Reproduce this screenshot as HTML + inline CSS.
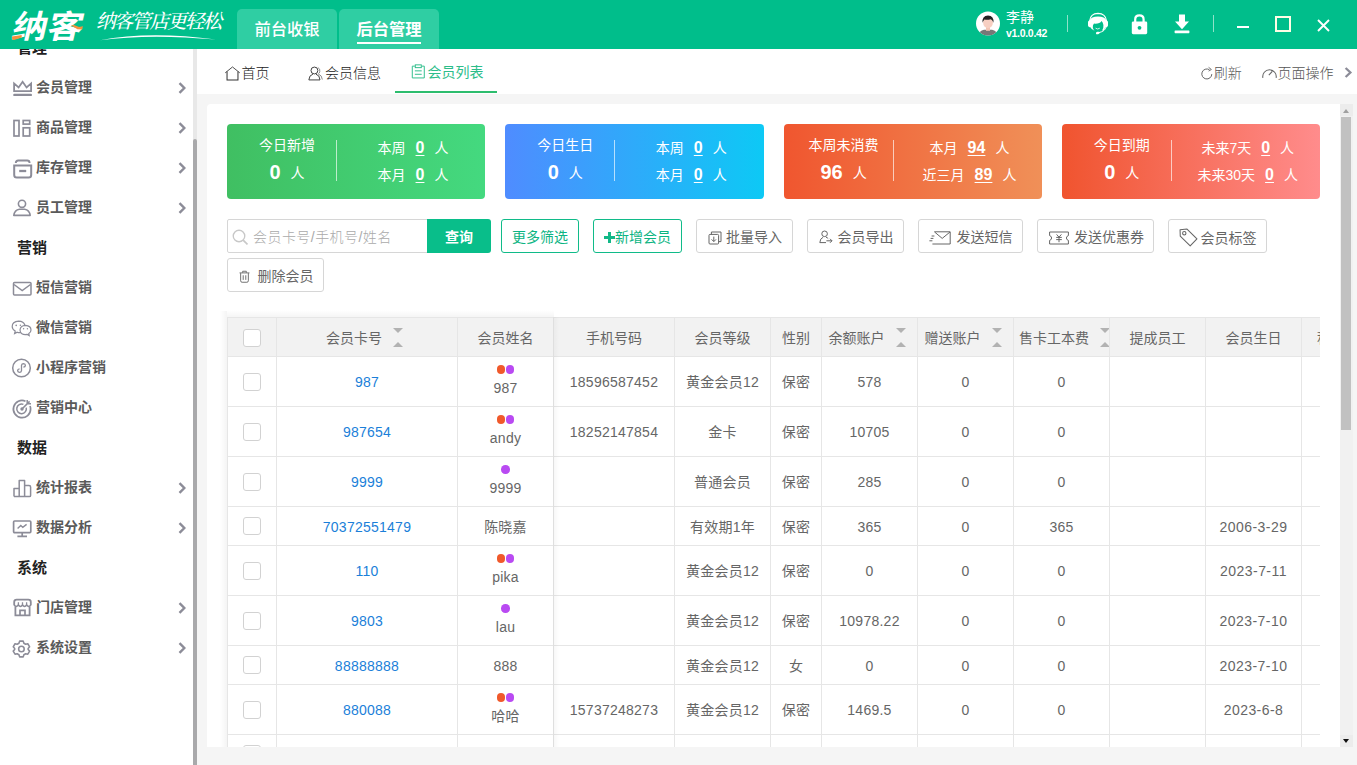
<!DOCTYPE html>
<html lang="zh-CN">
<head>
<meta charset="utf-8">
<title>纳客 - 会员列表</title>
<style>
*{box-sizing:border-box;margin:0;padding:0}
html,body{width:1357px;height:765px;overflow:hidden;background:#f5f5f5}
body{position:relative;font-family:"Liberation Sans","Noto Sans CJK SC",sans-serif;font-size:14px;color:#333}
.abs{position:absolute}
/* ---------- header ---------- */
#hdr{position:absolute;left:0;top:0;width:1357px;height:49px;background:#00be8b;z-index:10}
#logo{position:absolute;left:13px;top:7.5px;width:76px;font-size:32px;line-height:38px;font-weight:bold;color:#fff;letter-spacing:0;white-space:nowrap;transform-origin:0 50%;transform:scaleX(1.1) skewX(-12deg);font-family:"Liberation Sans","Noto Sans CJK SC",sans-serif}
#slogan{position:absolute;left:96px;top:9px;font-size:19.5px;line-height:26px;color:#fff;letter-spacing:-1.7px;font-style:italic;white-space:nowrap;font-family:"Liberation Serif","Noto Serif CJK SC",serif;font-weight:500}
.htab{position:absolute;top:9px;height:40px;width:100px;font-weight:500;background:#2fcea3;border-radius:5px 5px 0 0;color:#fff;font-size:16.3px;line-height:41px;text-align:center}
.htab.on{font-weight:bold}
.htab.on i{position:absolute;left:18px;right:18px;bottom:4.8px;height:2px;background:#fff}
#uname{position:absolute;left:1006px;top:8px;color:#fff;font-size:14px;line-height:18px}
#uver{position:absolute;left:1006px;top:26.2px;color:#fff;font-size:10.5px;line-height:14px;font-weight:bold;letter-spacing:-0.3px}
.hsep{position:absolute;top:15px;width:1px;height:17px;background:#8fe2c9}
/* ---------- sidebar ---------- */
#side{position:absolute;left:0;top:49px;width:193px;height:716px;background:#fff;overflow:hidden}
#sbar{position:absolute;left:193px;top:49px;width:4px;height:716px;background:#e8e8e8}
#sbar i{position:absolute;left:0;top:89.6px;width:4px;height:627px;background:#a9a9ab;border-radius:2px 2px 0 0}
.mi{position:absolute;left:0;width:193px;height:40px;line-height:41px;font-size:14px;font-weight:bold;color:#5a5a5a;padding-left:36px}
.mi svg.ic{position:absolute;left:11px;top:9px;width:22px;height:22px}
.mi svg.ar{position:absolute;left:177px;top:15px;width:10px;height:12px}
.mh{position:absolute;left:17px;width:160px;height:40px;line-height:42px;font-size:15px;font-weight:bold;color:#222}
/* ---------- main ---------- */
#tabs{position:absolute;left:197px;top:49px;width:1160px;height:45px;background:#fff}
.pt{position:absolute;top:0;height:45px;line-height:49px;font-size:14px;color:#222;white-space:nowrap;font-weight:300}
.pt.on{color:#2dbd8a;font-weight:400;top:-1.5px}
#panel{position:absolute;left:207px;top:104px;width:1133px;height:643px;background:#fff;overflow:hidden;border-radius:4px 0 0 0}
#vs{position:absolute;left:1340px;top:104px;width:13px;height:643px;background:#f1f1f1}
#vs i{position:absolute;left:1px;top:13px;width:10px;height:313px;background:#c1c1c1}
#vs b{position:absolute;left:0;width:13px;height:12px;background:#ececec}
#vs b.t{top:0}
#vs b.b{bottom:0}
#vs b.t:after{content:'';position:absolute;left:3px;top:4.5px;border:3.5px solid transparent;border-bottom:4.5px solid #a0a0a0;border-top-width:0}
#vs b.b:after{content:'';position:absolute;left:2.6px;top:3.8px;border:3.9px solid transparent;border-top:4.5px solid #111;border-bottom-width:0}

.pt svg.ti{display:inline-block;vertical-align:-2.5px;width:15px;height:15px;margin-right:2px;margin-left:-1px}
.pt.r{color:#555}
.ptline{position:absolute;left:198px;top:42px;width:102px;height:2px;background:#2dbd6e}
/* cards */
.card{position:absolute;top:20px;width:258.25px;height:75px;border-radius:4px;color:#fff;font-size:14px;font-weight:400}
.c1{background:linear-gradient(90deg,#40bf62,#44d97f)}
.c2{background:linear-gradient(90deg,#4f8cff,#0dc9f5)}
.c3{background:linear-gradient(90deg,#f0562f,#f09058)}
.c4{background:linear-gradient(90deg,#f0542f,#ff8c8c)}
.cl{position:absolute;left:0;top:0;width:120px;text-align:center}
.ct{position:absolute;left:0;width:120px;top:11px;line-height:20px}
.cn{position:absolute;left:0;width:120px;top:34.5px;line-height:26px}
.cn b{font-size:20px;margin-right:10px;vertical-align:-1px}
.cd{position:absolute;left:109px;top:16px;width:1px;height:41px;background:rgba(255,255,255,.65)}
.crs{position:absolute;left:110px;top:0;width:152px;text-align:center}
.cr{position:absolute;left:0;width:152px;line-height:20px;white-space:nowrap}
.cr:nth-child(1){top:13.5px}
.cr:nth-child(2){top:41px}
.cr b{font-size:16px;margin:0 10px;text-decoration:underline;text-underline-offset:2px}
/* toolbar */
.sinp{position:absolute;width:201px;height:34px;border:1px solid #d6d6d6;border-radius:2px 0 0 2px;background:#fff}
.sinp span{position:absolute;left:25px;top:0;line-height:34px;font-size:14px;color:#aaa;white-space:nowrap;letter-spacing:.45px;font-weight:300}
.qbtn{position:absolute;width:64px;height:34px;background:#09be8a;border-radius:0 3px 3px 0;color:#fff;font-weight:bold;font-size:14px;line-height:36px;text-align:center}
.btn{position:absolute;height:34px;border:1px solid #d6d6d6;border-radius:3px;background:#fff;color:#666;font-size:14px;line-height:35.5px;white-space:nowrap;font-weight:400}
.btn.g{border-color:#10bb89;color:#0cb483;text-align:center;font-weight:400}
.btn i{position:absolute;display:block;line-height:0}
.btn span{position:absolute;top:0}
.btn .plus{position:absolute;left:10px;top:12px;width:11px;height:11px;font-size:0}
.btn .plus:before{content:'';position:absolute;left:0;top:3.8px;width:10.8px;height:3.4px;background:#12b887}
.btn .plus:after{content:'';position:absolute;left:3.7px;top:0;width:3.6px;height:11px;background:#12b887}
/* table */
#tbl{position:absolute;width:1093px;height:430px;overflow:hidden}
#tbl .thbg{position:absolute;background:#f2f2f2}
#tbl .hl{position:absolute;left:0;width:1200px;height:1px;background:#e6e6e6}
#tbl .vl{position:absolute;top:0;width:1px;height:500px;background:#e6e6e6}
#tbl .th{position:absolute;height:38px;line-height:40px;text-align:center;color:#666;font-weight:400;font-size:14px;white-space:nowrap;overflow:hidden}
#tbl .td{position:absolute;text-align:center;color:#666;font-weight:400;padding-top:.5px;letter-spacing:.25px;font-size:14px;white-space:nowrap;overflow:hidden}
#tbl .td.lk{color:#1b7fd9}
#tbl .td.dt{letter-spacing:.45px}
#tbl .cbx{position:absolute;width:18px;height:18px;border:1px solid #d2d2d2;border-radius:3px;background:#fff}
#tbl .st{display:inline-block;position:relative;width:10px;height:20px;margin-left:11px;margin-right:5px;vertical-align:-6px;text-decoration:none}
#tbl .st u{position:absolute;left:0;width:0;height:0;border:5px solid transparent;text-decoration:none}
#tbl .st u.d{top:-0.6px;border-top-color:#b2b2b2;border-bottom-width:0}
#tbl .st u.u{top:13.2px;border-bottom-color:#b2b2b2;border-top-width:0}
#tbl .dots{position:absolute;left:0;right:0;top:8px;height:9px;line-height:0;text-align:center;font-size:0}
#tbl .dots em{display:inline-block;width:8.6px;height:8.6px;border-radius:50%;margin:0 .4px}
#tbl .dots em.o{background:#f0592b}
#tbl .dots em.v{background:#b94af2}
#tbl .nn{position:absolute;left:0;right:0;top:20px;line-height:22px}
#tbl .fsh{position:absolute;top:0;width:6px;height:500px;background:linear-gradient(90deg,rgba(0,0,0,.035),rgba(0,0,0,0))}
</style>
</head>
<body>
<div id="hdr">
  <div id="logo">纳客</div>
  <div id="slogan">纳客管店更轻松</div>
  <svg class="abs" style="left:0;top:0;width:230px;height:49px" viewBox="0 0 230 49"><path d="M100 40.2 Q150 30.6 216 39.6 Q150 33.4 100 40.2 Z" fill="#fff"/><path d="M12 36.6 L21.6 35 L21.8 37.6 L14 40 L12.2 39.4 Z" fill="#f5923e"/><path d="M71 25.2 L74 25 L79 27 L83 26.2 L82 29.4 L77.4 29.2 Z" fill="#f5923e"/></svg>
  <div class="htab" style="left:237px">前台收银</div>
  <div class="htab on" style="left:339px">后台管理<i></i></div>
  <svg class="abs" style="left:975px;top:11px;width:26px;height:26px" viewBox="0 0 26 26"><defs><clipPath id="avc"><circle cx="13" cy="12.6" r="12"/></clipPath></defs><circle cx="13" cy="12.6" r="12" fill="#fff"/><g clip-path="url(#avc)"><path d="M3 26 Q3.6 19.6 9 18.8 H17 Q22.4 19.6 23 26 Z" fill="#777"/><rect x="11" y="15.6" width="4" height="4.2" fill="#f3c4b4"/><ellipse cx="13" cy="11.6" rx="4.9" ry="5.6" fill="#f7cfc2"/><path d="M7.6 11.8 Q6.8 5 13 4.6 Q19.2 5 18.4 11.8 Q17.6 8.8 15.8 8.2 Q12 9.4 9.4 8.4 Q8.2 9.6 7.6 11.8 Z" fill="#222"/></g></svg>
  <svg class="abs" style="left:1083px;top:9px;width:30px;height:30px" viewBox="0 0 30 30"><path d="M6.6 12 Q7.4 4.6 15 4.4 Q22.6 4.6 23.6 12" fill="none" stroke="#fff" stroke-width="1.1"/><path d="M5 13 Q5 11.6 6.6 11.4 Q8 7.6 15 7.4 Q22 7.6 23.4 11.4 Q25 11.6 25 13 V16.6 Q25 18 23.4 18.2 L22.6 18.2 Q21.4 21.2 19 21.8 Q20.8 19.4 20.4 16 Q20 13.6 18.6 12 Q16.8 15 11 14.6 Q9.6 16.4 9.8 18.4 Q10 20.4 11.6 21.8 Q8.6 20.8 7.4 18.2 L6.6 18.2 Q5 18 5 16.6 Z" fill="#fff"/><path d="M12.6 19.2 Q14.6 20.8 16.8 19.2" fill="none" stroke="#fff" stroke-width="0.8"/><path d="M23.2 17.6 Q22.4 22.2 16 23.6" fill="none" stroke="#fff" stroke-width="1"/><ellipse cx="14.8" cy="24" rx="1.9" ry="1.3" fill="#fff" transform="rotate(-12 14.8 24)"/></svg>
  <svg class="abs" style="left:1131px;top:14px;width:17px;height:21px" viewBox="0 0 17 21"><path d="M4.2 8 V5.4 Q4.2 1.4 8.4 1.4 Q12.6 1.4 12.6 5.4 V8" fill="none" stroke="#fff" stroke-width="2.2"/><rect x="0.8" y="7.4" width="15.4" height="12.8" rx="1.4" fill="#fff"/><circle cx="8.5" cy="13.8" r="1.9" fill="#00be8b"/></svg>
  <svg class="abs" style="left:1174px;top:14px;width:16px;height:20px" viewBox="0 0 16 20"><path d="M5 0.6 H11 V7.4 H15 L8 15.2 L1 7.4 H5 Z" fill="#fff"/><rect x="0.6" y="16.4" width="14.8" height="2.8" rx="0.6" fill="#fff"/></svg>
  <div class="abs" style="left:1237px;top:25.5px;width:12px;height:2.5px;background:#fff"></div>
  <div class="abs" style="left:1275px;top:16px;width:16px;height:16px;border:2px solid #fffde6"></div>
  <svg class="abs" style="left:1317px;top:18.5px;width:13px;height:13px" viewBox="0 0 13 13"><path d="M1 1 L12 12 M12 1 L1 12" stroke="#fff" stroke-width="1.9" fill="none"/></svg>
  <div id="uname">李静</div>
  <div id="uver">v1.0.0.42</div>
  <div class="hsep" style="left:1067px"></div>
  <div class="hsep" style="left:1213px"></div>
</div>
<div id="side">
<div class="mh" style="top:-22px">管理</div>
<div class="mi" style="top:18px"><svg class="ic" viewBox="0 0 22 22" style="left:11.5px;top:12.5px"><path d="M2.1 3.4 V11.2 H19.1 V3.4 L14.6 7.4 L10.6 1.8 L6.6 7.4 Z" fill="none" stroke="#8c8c98" stroke-width="1.8" /><path d="M2.4 14.9 H18.8" fill="none" stroke="#8c8c98" stroke-width="2.4" stroke-linecap="round"/></svg>会员管理<svg class="ar" viewBox="0 0 10 12"><path d="M2.5 1.2 L7.3 6 L2.5 10.8" fill="none" stroke="#8c8c98" stroke-width="2.4"/></svg></div>
<div class="mi" style="top:58px"><svg class="ic" viewBox="0 0 22 22" style="left:11.5px;top:11.2px"><rect x="2" y="2.5" width="5" height="15.5" rx="0" fill="none" stroke="#8c8c98" stroke-width="1.7"/><rect x="11.2" y="2.5" width="6.5" height="3.6" rx="0" fill="none" stroke="#8c8c98" stroke-width="1.7"/><rect x="11.2" y="9.8" width="6.5" height="8.2" rx="0" fill="none" stroke="#8c8c98" stroke-width="1.7"/></svg>商品管理<svg class="ar" viewBox="0 0 10 12"><path d="M2.5 1.2 L7.3 6 L2.5 10.8" fill="none" stroke="#8c8c98" stroke-width="2.4"/></svg></div>
<div class="mi" style="top:98px"><svg class="ic" viewBox="0 0 22 22" style="left:11.5px;top:11.5px"><path d="M3.8 4 Q3.8 1.5 6.2 1.5 H15.2 Q17.6 1.5 17.6 4" fill="none" stroke="#8c8c98" stroke-width="1.9" /><path d="M2.2 6.6 H19.2 V16 Q19.2 18.6 16.6 18.6 H4.8 Q2.2 18.6 2.2 16 Z" fill="none" stroke="#8c8c98" stroke-width="2" /><path d="M7.2 12 H14.2" fill="none" stroke="#8c8c98" stroke-width="2.3" /></svg>库存管理<svg class="ar" viewBox="0 0 10 12"><path d="M2.5 1.2 L7.3 6 L2.5 10.8" fill="none" stroke="#8c8c98" stroke-width="2.4"/></svg></div>
<div class="mi" style="top:138px"><svg class="ic" viewBox="0 0 22 22" style="left:11.5px;top:10.5px"><circle cx="10" cy="5.8" r="3.6" fill="none" stroke="#8c8c98" stroke-width="1.6"/><path d="M1.8 17.4 Q2.6 11.8 7.4 11.2 H12.6 Q17.4 11.8 18.2 17.4 Z" fill="none" stroke="#8c8c98" stroke-width="1.6" stroke-linejoin="round"/></svg>员工管理<svg class="ar" viewBox="0 0 10 12"><path d="M2.5 1.2 L7.3 6 L2.5 10.8" fill="none" stroke="#8c8c98" stroke-width="2.4"/></svg></div>
<div class="mh" style="top:178px">营销</div>
<div class="mi" style="top:218px"><svg class="ic" viewBox="0 0 22 22" style="left:11.5px;top:11.7px"><rect x="1.5" y="3.5" width="17.5" height="12.5" rx="1" fill="none" stroke="#8c8c98" stroke-width="1.5"/><path d="M2 5.5 L10.2 11.5 L18.5 5.5" fill="none" stroke="#8c8c98" stroke-width="1.5" /></svg>短信营销</div>
<div class="mi" style="top:258px"><svg class="ic" viewBox="0 0 22 22" style="left:11px;top:11px"><path d="M9 14.6 Q7.6 14.8 6.2 14.2 L3.6 15.6 L4.2 13 Q1.2 11.2 1.2 8.4 Q1.2 3.8 7.6 3.2 Q12.8 3.4 13.8 7.2" fill="none" stroke="#8c8c98" stroke-width="1.2" /><path d="M14.5 7.4 Q20 7.8 20 12 Q20 14.2 17.8 15.6 L18.2 17.6 L16.2 16.4 Q9.2 17.4 9 12 Q9.4 7.6 14.5 7.4 Z" fill="none" stroke="#8c8c98" stroke-width="1.2" /><circle cx="5.2" cy="7.4" r="0.8" fill="#8c8c98"/><circle cx="9.4" cy="7.2" r="0.8" fill="#8c8c98"/><circle cx="12.6" cy="10.8" r="0.7" fill="#8c8c98"/><circle cx="16.4" cy="10.8" r="0.7" fill="#8c8c98"/></svg>微信营销</div>
<div class="mi" style="top:298px"><svg class="ic" viewBox="0 0 22 22" style="left:11.3px;top:11.2px"><circle cx="10.5" cy="10" r="8.8" fill="none" stroke="#8c8c98" stroke-width="1.5"/><path d="M10.5 7.2 V12.6 Q10.3 14.4 8.4 14.4 Q6.6 14.3 6.6 12.6 Q6.7 11 8.6 10.8 M10.5 12.8 V7.4 Q10.7 5.6 12.6 5.6 Q14.4 5.7 14.4 7.4 Q14.3 9 12.4 9.2" fill="none" stroke="#8c8c98" stroke-width="1.3" /></svg>小程序营销</div>
<div class="mi" style="top:338px"><svg class="ic" viewBox="0 0 22 22" style="left:11.3px;top:11.2px"><path d="M19 8 Q19.6 9.4 19.6 11 A8.6 8.6 0 1 1 14.5 3.2" fill="none" stroke="#8c8c98" stroke-width="1.7" /><path d="M15.2 9.6 A4.8 4.8 0 1 1 12.4 6.4" fill="none" stroke="#8c8c98" stroke-width="1.5" /><circle cx="11" cy="11" r="1.7" fill="#8c8c98"/><path d="M11 11 L18.6 3.4 M16.2 2 V5.8 H20" fill="none" stroke="#8c8c98" stroke-width="1.5" /></svg>营销中心</div>
<div class="mh" style="top:378px">数据</div>
<div class="mi" style="top:418px"><svg class="ic" viewBox="0 0 22 22" style="left:11.6px;top:11.2px"><path d="M2 18.6 V10.6 H7.2 M7.2 18.6 V2.6 H12.6 V18.6 M12.6 7.4 H17 Q18.6 7.4 18.6 9 V17.4 Q18.6 18.6 17.4 18.6 H2" fill="none" stroke="#8c8c98" stroke-width="1.5" stroke-linejoin="round"/></svg>统计报表<svg class="ar" viewBox="0 0 10 12"><path d="M2.5 1.2 L7.3 6 L2.5 10.8" fill="none" stroke="#8c8c98" stroke-width="2.4"/></svg></div>
<div class="mi" style="top:458px"><svg class="ic" viewBox="0 0 22 22" style="left:11.6px;top:10.6px"><rect x="1.6" y="3" width="17.2" height="11.6" rx="1" fill="none" stroke="#8c8c98" stroke-width="1.7"/><path d="M10.2 14.6 V18 M5.4 18.4 H15" fill="none" stroke="#8c8c98" stroke-width="1.7" /><path d="M5.6 10.4 L8.8 7.4 L10.8 9.4 L14.6 6.4" fill="none" stroke="#8c8c98" stroke-width="1.4" /></svg>数据分析<svg class="ar" viewBox="0 0 10 12"><path d="M2.5 1.2 L7.3 6 L2.5 10.8" fill="none" stroke="#8c8c98" stroke-width="2.4"/></svg></div>
<div class="mh" style="top:498px">系统</div>
<div class="mi" style="top:538px"><svg class="ic" viewBox="0 0 22 22" style="left:11.6px;top:10.4px"><path d="M3.4 9.8 V18.4 H17.6 V9.8" fill="none" stroke="#8c8c98" stroke-width="1.8" /><path d="M2.2 8.2 V5 Q2.2 2.6 4.6 2.6 H16.4 Q18.8 2.6 18.8 5 V8.2" fill="none" stroke="#8c8c98" stroke-width="1.8" /><path d="M2.2 8 Q4 10.8 6.4 8 Q8.4 10.8 10.5 8 Q12.6 10.8 14.6 8 Q17 10.8 18.8 8" fill="none" stroke="#8c8c98" stroke-width="1.5" /><path d="M6.4 5.2 V8 M10.5 5.2 V8 M14.6 5.2 V8" fill="none" stroke="#8c8c98" stroke-width="1.3" /><path d="M8 18.4 V13.4 H13 V18.4" fill="none" stroke="#8c8c98" stroke-width="1.7" /></svg>门店管理<svg class="ar" viewBox="0 0 10 12"><path d="M2.5 1.2 L7.3 6 L2.5 10.8" fill="none" stroke="#8c8c98" stroke-width="2.4"/></svg></div>
<div class="mi" style="top:578px"><svg class="ic" viewBox="0 0 22 22" style="left:11px;top:11px"><g transform="translate(1.4,1.8) scale(0.82)"><path d="M8.8 1.6 H13.2 L14 4.2 L16.2 5.4 L18.8 4.8 L21 8.6 L19.2 10.6 V11.8 L21 13.8 L18.8 17.6 L16.2 17 L14 18.2 L13.2 20.8 H8.8 L8 18.2 L5.8 17 L3.2 17.6 L1 13.8 L2.8 11.8 V10.6 L1 8.6 L3.2 4.8 L5.8 5.4 L8 4.2 Z" fill="none" stroke="#8c8c98" stroke-width="1.9" stroke-linejoin="round"/><circle cx="11" cy="11.2" r="3.4" fill="none" stroke="#8c8c98" stroke-width="1.9"/></g></svg>系统设置<svg class="ar" viewBox="0 0 10 12"><path d="M2.5 1.2 L7.3 6 L2.5 10.8" fill="none" stroke="#8c8c98" stroke-width="2.4"/></svg></div>
</div>
<div id="sbar"><i></i></div>
<div id="tabs">
<div class="pt" style="left:28.5px"><svg class="ti" viewBox="0 0 14 14"><path d="M0.2 6.4 L7 0.9 L13.8 6.4" fill="none" stroke="#333" stroke-width="0.8"/><path d="M1.9 5.2 V13.1 H12.1 V5.2" fill="none" stroke="#333" stroke-width="0.95"/></svg>首页</div>
<div class="pt" style="left:112px"><svg class="ti" viewBox="0 0 14 14"><circle cx="6" cy="4.2" r="3.2" fill="none" stroke="#333" stroke-width="0.85"/><path d="M0.8 13 Q1 8.6 4.6 7.6 M7.4 7.6 Q11 8.6 11.2 13 H0.8" fill="none" stroke="#333" stroke-width="0.85"/><path d="M9.2 1.4 Q11.6 2.4 11 5.4 Q10.6 6.8 9.6 7.4 Q13 8.6 13.4 12.6" fill="none" stroke="#888" stroke-width="0.9"/></svg>会员信息</div>
<div class="pt on" style="left:214.5px"><svg class="ti" viewBox="0 0 14 14"><path d="M3.6 2 H1.2 V13 H12.4 V2 H10" fill="none" stroke="#2dbd8a" stroke-width="0.9"/><rect x="4" y="0.8" width="5.6" height="2.6" fill="none" stroke="#2dbd8a" stroke-width="0.9"/><path d="M3.6 6.4 H10 M3.6 9.6 H10" fill="none" stroke="#2dbd8a" stroke-width="0.9"/></svg>会员列表</div>
<div class="ptline"></div>
<div class="pt r" style="left:1004.5px"><svg class="ti" style="width:12px;margin-right:1.3px" viewBox="0 0 12 14"><path d="M10.8 7.6 A5 5 0 1 1 8.4 3.2" fill="none" stroke="#666" stroke-width="1"/><path d="M7.6 0.8 L10.4 3 L7.6 4.6" fill="none" stroke="#666" stroke-width="0.9"/></svg>刷新</div>
<div class="pt r" style="left:1066px"><svg class="ti" style="margin-right:0.5px" viewBox="0 0 14 14"><path d="M0.8 11 A6.3 6.3 0 1 1 13.2 11" fill="none" stroke="#666" stroke-width="1"/><path d="M6.4 8.6 L9.6 5" fill="none" stroke="#666" stroke-width="1"/></svg>页面操作</div>
<svg class="abs" style="left:1147px;top:18px;width:9px;height:11px" viewBox="0 0 9 11"><path d="M1.6 1 L6.4 5.5 L1.6 10" fill="none" stroke="#8c8c98" stroke-width="2.3"/></svg>
</div>
<div id="panel">
<div class="card c1" style="left:20px"><div class="cl"><div class="ct">今日新增</div><div class="cn"><b>0</b>人</div></div><i class="cd"></i><div class="crs"><div class="cr">本周<b>0</b>人</div><div class="cr">本月<b>0</b>人</div></div></div>
<div class="card c2" style="left:298.25px"><div class="cl"><div class="ct">今日生日</div><div class="cn"><b>0</b>人</div></div><i class="cd"></i><div class="crs"><div class="cr">本周<b>0</b>人</div><div class="cr">本月<b>0</b>人</div></div></div>
<div class="card c3" style="left:576.5px"><div class="cl"><div class="ct">本周未消费</div><div class="cn"><b>96</b>人</div></div><i class="cd"></i><div class="crs"><div class="cr">本月<b>94</b>人</div><div class="cr">近三月<b>89</b>人</div></div></div>
<div class="card c4" style="left:854.75px"><div class="cl"><div class="ct">今日到期</div><div class="cn"><b>0</b>人</div></div><i class="cd"></i><div class="crs"><div class="cr">未来7天<b>0</b>人</div><div class="cr">未来30天<b>0</b>人</div></div></div>
<div class="sinp" style="left:20px;top:115px"><svg viewBox="0 0 16 16" style="position:absolute;left:3.5px;top:9px;width:16.5px;height:16.5px"><circle cx="6.8" cy="6.8" r="5.6" fill="none" stroke="#c8c8c8" stroke-width="1.3"/><path d="M10.8 10.8 L15 15" stroke="#c8c8c8" stroke-width="1.6" fill="none"/></svg><span>会员卡号/手机号/姓名</span></div>
<div class="qbtn" style="left:220px;top:115px">查询</div>
<div class="btn g" style="left:294px;top:115px;width:78px">更多筛选</div>
<div class="btn g" style="left:386px;top:115px;width:89px"><b class="plus">+</b><span style="left:21px">新增会员</span></div>
<div class="btn" style="left:489px;top:115px;width:97px"><i style="left:10.5px;top:10.5px"><svg viewBox="0 0 14 14" style="width:14px;height:14px"><path d="M3.4 3.4 V1 H13 V10.6 H10.6" fill="none" stroke="#666" stroke-width="1"/><rect x="1" y="3.4" width="9.6" height="9.6" rx="1" fill="none" stroke="#666" stroke-width="1"/><path d="M5.8 5.6 V10.4 M3.6 8.4 L5.8 10.6 L8 8.4" fill="none" stroke="#666" stroke-width="1"/></svg></i><span style="left:29px">批量导入</span></div>
<div class="btn" style="left:600px;top:115px;width:97px"><i style="left:10.5px;top:10px"><svg viewBox="0 0 14 14" style="width:14px;height:14px"><circle cx="5.6" cy="3.8" r="2.8" fill="none" stroke="#666" stroke-width="1"/><path d="M7 12.6 H0.8 Q1 8.4 4.2 7.2 M7 7.2 Q8.4 7.6 9.2 8.6" fill="none" stroke="#666" stroke-width="1"/><path d="M7.4 10.8 H13 M11 8.8 L13 10.8 L11 12.8" fill="none" stroke="#666" stroke-width="1"/></svg></i><span style="left:29.5px">会员导出</span></div>
<div class="btn" style="left:711px;top:115px;width:105px"><i style="left:10px;top:11px"><svg viewBox="0 0 22 14" style="width:22px;height:14px"><path d="M5.4 0.8 H21.2 V13 H3.4" fill="none" stroke="#666" stroke-width="1"/><path d="M5.6 1 L13.2 7.4 L21 1" fill="none" stroke="#666" stroke-width="1"/><path d="M2.6 5 H5.4 M1.6 7.4 H4.4 M0.4 9.8 H3.4" fill="none" stroke="#666" stroke-width="1"/></svg></i><span style="left:37.5px">发送短信</span></div>
<div class="btn" style="left:830px;top:115px;width:117px"><i style="left:10.5px;top:11px"><svg viewBox="0 0 20 14" style="width:20px;height:14px"><path d="M0.6 1 H19.4 V4.6 Q17.4 5.2 17.4 7 Q17.4 8.8 19.4 9.4 V13 H0.6 V9.4 Q2.6 8.8 2.6 7 Q2.6 5.2 0.6 4.6 Z" fill="none" stroke="#666" stroke-width="1"/><path d="M7.6 3.4 L10 6.2 L12.4 3.4 M7.2 6.4 H12.8 M7.2 8.6 H12.8 M10 6.2 V11.2" fill="none" stroke="#666" stroke-width="1"/></svg></i><span style="left:36px">发送优惠券</span></div>
<div class="btn" style="left:961px;top:115px;width:99px"><i style="left:10px;top:8px"><svg viewBox="0 0 18 18" style="width:19px;height:19px"><path d="M1 1.6 L7.6 1 L17 10.4 L10.6 17 L1.2 7.8 Z" fill="none" stroke="#666" stroke-width="1" stroke-linejoin="round"/><circle cx="5" cy="5" r="1.6" fill="none" stroke="#666" stroke-width="1"/></svg></i><span style="left:31.5px;top:1px">会员标签</span></div>
<div class="btn" style="left:20px;top:154px;width:97px"><i style="left:11px;top:11px"><svg viewBox="0 0 12 14" style="width:11px;height:13.5px"><path d="M0.6 2.8 H11.4 M4 2.6 V1 H8 V2.6 M1.8 3 V11.4 Q1.8 13 3.4 13 H8.6 Q10.2 13 10.2 11.4 V3 M4.6 5.4 V10.4 M7.4 5.4 V10.4" fill="none" stroke="#666" stroke-width="1"/></svg></i><span style="left:29.5px">删除会员</span></div>
<i class="abs" style="left:13px;top:207px;width:7px;height:440px;background:linear-gradient(90deg,rgba(0,0,0,0),rgba(0,0,0,.045))"></i><i class="abs" style="left:20px;top:206px;width:327px;height:7px;background:linear-gradient(180deg,rgba(0,0,0,0),rgba(0,0,0,.04))"></i>
<div id="tbl" style="left:20px;top:213px">
<div class="thbg" style="left:0;top:0;width:1200px;height:40px"></div>
<i class="hl" style="top:0px"></i>
<i class="hl" style="top:39px"></i>
<i class="hl" style="top:89px"></i>
<i class="hl" style="top:139px"></i>
<i class="hl" style="top:189px"></i>
<i class="hl" style="top:228px"></i>
<i class="hl" style="top:278px"></i>
<i class="hl" style="top:328px"></i>
<i class="hl" style="top:367px"></i>
<i class="hl" style="top:417px"></i>
<i class="hl" style="top:467px"></i>
<i class="vl" style="left:0px"></i>
<i class="vl" style="left:49px"></i>
<i class="vl" style="left:230px"></i>
<i class="vl" style="left:326px"></i>
<i class="vl" style="left:447px"></i>
<i class="vl" style="left:543px"></i>
<i class="vl" style="left:594px"></i>
<i class="vl" style="left:690px"></i>
<i class="vl" style="left:786px"></i>
<i class="vl" style="left:882px"></i>
<i class="vl" style="left:978px"></i>
<i class="vl" style="left:1074px"></i>
<i class="vl" style="left:1170px"></i>
<i class="cbx" style="left:16px;top:12px"></i>
<div class="th" style="left:50px;width:180px;top:1px">会员卡号<s class="st"><u class="d"></u><u class="u"></u></s></div>
<div class="th" style="left:231px;width:95px;top:1px">会员姓名</div>
<div class="th" style="left:327px;width:120px;top:1px">手机号码</div>
<div class="th" style="left:448px;width:95px;top:1px">会员等级</div>
<div class="th" style="left:544px;width:50px;top:1px">性别</div>
<div class="th" style="left:595px;width:95px;top:1px">余额账户<s class="st"><u class="d"></u><u class="u"></u></s></div>
<div class="th" style="left:691px;width:95px;top:1px">赠送账户<s class="st"><u class="d"></u><u class="u"></u></s></div>
<div class="th" style="left:787px;width:95px;top:1px;text-align:left;padding-left:5px">售卡工本费<s class="st"><u class="d"></u><u class="u"></u></s></div>
<div class="th" style="left:883px;width:95px;top:1px">提成员工</div>
<div class="th" style="left:979px;width:95px;top:1px">会员生日</div>
<div class="th" style="left:1090px;width:60px;top:1px;text-align:left">积分</div>
<i class="cbx" style="left:16px;top:55.5px"></i>
<div class="td lk" style="left:50px;width:180px;top:40px;height:49px;line-height:49px">987</div>
<div class="td nm" style="left:231px;width:95px;top:40px;height:49px"><div class="dots"><em class="o"></em><em class="v"></em></div><div class="nn">987</div></div>
<div class="td" style="left:327px;width:120px;top:40px;height:49px;line-height:49px">18596587452</div>
<div class="td" style="left:448px;width:95px;top:40px;height:49px;line-height:49px">黄金会员12</div>
<div class="td" style="left:544px;width:50px;top:40px;height:49px;line-height:49px">保密</div>
<div class="td" style="left:595px;width:95px;top:40px;height:49px;line-height:49px">578</div>
<div class="td" style="left:691px;width:95px;top:40px;height:49px;line-height:49px">0</div>
<div class="td" style="left:787px;width:95px;top:40px;height:49px;line-height:49px">0</div>
<i class="cbx" style="left:16px;top:105.5px"></i>
<div class="td lk" style="left:50px;width:180px;top:90px;height:49px;line-height:49px">987654</div>
<div class="td nm" style="left:231px;width:95px;top:90px;height:49px"><div class="dots"><em class="o"></em><em class="v"></em></div><div class="nn">andy</div></div>
<div class="td" style="left:327px;width:120px;top:90px;height:49px;line-height:49px">18252147854</div>
<div class="td" style="left:448px;width:95px;top:90px;height:49px;line-height:49px">金卡</div>
<div class="td" style="left:544px;width:50px;top:90px;height:49px;line-height:49px">保密</div>
<div class="td" style="left:595px;width:95px;top:90px;height:49px;line-height:49px">10705</div>
<div class="td" style="left:691px;width:95px;top:90px;height:49px;line-height:49px">0</div>
<div class="td" style="left:787px;width:95px;top:90px;height:49px;line-height:49px">0</div>
<i class="cbx" style="left:16px;top:155.5px"></i>
<div class="td lk" style="left:50px;width:180px;top:140px;height:49px;line-height:49px">9999</div>
<div class="td nm" style="left:231px;width:95px;top:140px;height:49px"><div class="dots"><em class="v"></em></div><div class="nn">9999</div></div>
<div class="td" style="left:448px;width:95px;top:140px;height:49px;line-height:49px">普通会员</div>
<div class="td" style="left:544px;width:50px;top:140px;height:49px;line-height:49px">保密</div>
<div class="td" style="left:595px;width:95px;top:140px;height:49px;line-height:49px">285</div>
<div class="td" style="left:691px;width:95px;top:140px;height:49px;line-height:49px">0</div>
<div class="td" style="left:787px;width:95px;top:140px;height:49px;line-height:49px">0</div>
<i class="cbx" style="left:16px;top:200.0px"></i>
<div class="td lk" style="left:50px;width:180px;top:190px;height:38px;line-height:38px">70372551479</div>
<div class="td" style="left:231px;width:95px;top:190px;height:38px;line-height:38px">陈晓嘉</div>
<div class="td" style="left:448px;width:95px;top:190px;height:38px;line-height:38px">有效期1年</div>
<div class="td" style="left:544px;width:50px;top:190px;height:38px;line-height:38px">保密</div>
<div class="td" style="left:595px;width:95px;top:190px;height:38px;line-height:38px">365</div>
<div class="td" style="left:691px;width:95px;top:190px;height:38px;line-height:38px">0</div>
<div class="td" style="left:787px;width:95px;top:190px;height:38px;line-height:38px">365</div>
<div class="td dt" style="left:979px;width:95px;top:190px;height:38px;line-height:38px">2006-3-29</div>
<i class="cbx" style="left:16px;top:244.5px"></i>
<div class="td lk" style="left:50px;width:180px;top:229px;height:49px;line-height:49px">110</div>
<div class="td nm" style="left:231px;width:95px;top:229px;height:49px"><div class="dots"><em class="o"></em><em class="v"></em></div><div class="nn">pika</div></div>
<div class="td" style="left:448px;width:95px;top:229px;height:49px;line-height:49px">黄金会员12</div>
<div class="td" style="left:544px;width:50px;top:229px;height:49px;line-height:49px">保密</div>
<div class="td" style="left:595px;width:95px;top:229px;height:49px;line-height:49px">0</div>
<div class="td" style="left:691px;width:95px;top:229px;height:49px;line-height:49px">0</div>
<div class="td" style="left:787px;width:95px;top:229px;height:49px;line-height:49px">0</div>
<div class="td dt" style="left:979px;width:95px;top:229px;height:49px;line-height:49px">2023-7-11</div>
<i class="cbx" style="left:16px;top:294.5px"></i>
<div class="td lk" style="left:50px;width:180px;top:279px;height:49px;line-height:49px">9803</div>
<div class="td nm" style="left:231px;width:95px;top:279px;height:49px"><div class="dots"><em class="v"></em></div><div class="nn">lau</div></div>
<div class="td" style="left:448px;width:95px;top:279px;height:49px;line-height:49px">黄金会员12</div>
<div class="td" style="left:544px;width:50px;top:279px;height:49px;line-height:49px">保密</div>
<div class="td" style="left:595px;width:95px;top:279px;height:49px;line-height:49px">10978.22</div>
<div class="td" style="left:691px;width:95px;top:279px;height:49px;line-height:49px">0</div>
<div class="td" style="left:787px;width:95px;top:279px;height:49px;line-height:49px">0</div>
<div class="td dt" style="left:979px;width:95px;top:279px;height:49px;line-height:49px">2023-7-10</div>
<i class="cbx" style="left:16px;top:339.0px"></i>
<div class="td lk" style="left:50px;width:180px;top:329px;height:38px;line-height:38px">88888888</div>
<div class="td" style="left:231px;width:95px;top:329px;height:38px;line-height:38px">888</div>
<div class="td" style="left:448px;width:95px;top:329px;height:38px;line-height:38px">黄金会员12</div>
<div class="td" style="left:544px;width:50px;top:329px;height:38px;line-height:38px">女</div>
<div class="td" style="left:595px;width:95px;top:329px;height:38px;line-height:38px">0</div>
<div class="td" style="left:691px;width:95px;top:329px;height:38px;line-height:38px">0</div>
<div class="td" style="left:787px;width:95px;top:329px;height:38px;line-height:38px">0</div>
<div class="td dt" style="left:979px;width:95px;top:329px;height:38px;line-height:38px">2023-7-10</div>
<i class="cbx" style="left:16px;top:383.5px"></i>
<div class="td lk" style="left:50px;width:180px;top:368px;height:49px;line-height:49px">880088</div>
<div class="td nm" style="left:231px;width:95px;top:368px;height:49px"><div class="dots"><em class="o"></em><em class="v"></em></div><div class="nn">哈哈</div></div>
<div class="td" style="left:327px;width:120px;top:368px;height:49px;line-height:49px">15737248273</div>
<div class="td" style="left:448px;width:95px;top:368px;height:49px;line-height:49px">黄金会员12</div>
<div class="td" style="left:544px;width:50px;top:368px;height:49px;line-height:49px">保密</div>
<div class="td" style="left:595px;width:95px;top:368px;height:49px;line-height:49px">1469.5</div>
<div class="td" style="left:691px;width:95px;top:368px;height:49px;line-height:49px">0</div>
<div class="td" style="left:787px;width:95px;top:368px;height:49px;line-height:49px">0</div>
<div class="td dt" style="left:979px;width:95px;top:368px;height:49px;line-height:49px">2023-6-8</div>
<i class="cbx" style="left:16px;top:428px"></i>
<div class="td lk" style="left:50px;width:180px;top:418px;height:49px;line-height:49px"></div>
<div class="td" style="left:231px;width:95px;top:418px;height:49px;line-height:49px"></div>
<i class="fsh" style="left:326px"></i>
</div>
</div>
<div id="vs"><b class="t"></b><i></i><b class="b"></b></div>
</body>
</html>
